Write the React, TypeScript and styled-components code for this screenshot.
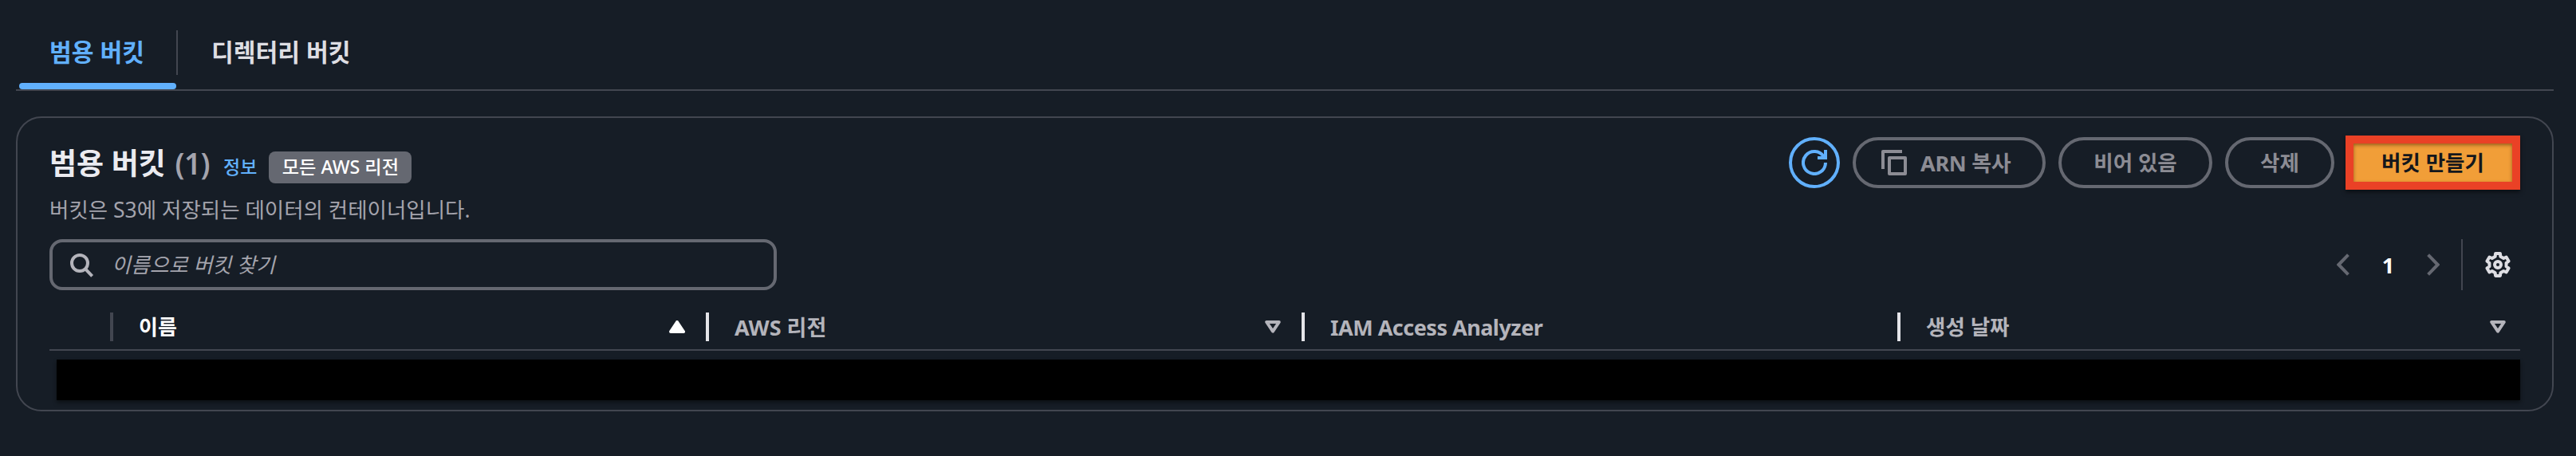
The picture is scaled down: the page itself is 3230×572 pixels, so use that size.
import React from "react";
import styled, { createGlobalStyle, css } from "styled-components";

const color = {
  bg: "#161d26",
  line: "#424650",
  border: "#656871",
  blue: "#61b0fc",
  text: "#dedee3",
  heading: "#ebebf0",
  muted: "#a4a4ad",
  column: "#b4b4bb",
  disabled: "#8c8c94",
};

const GlobalStyle = createGlobalStyle`
  * { box-sizing: border-box; }
  body {
    margin: 0;
    background: ${color.bg};
    font-family: "Noto Sans", "Noto Sans CJK KR", sans-serif;
    color: ${color.text};
  }
`;

const Page = styled.main`
  width: 3230px;
  height: 572px;
  overflow: hidden;
  padding: 0 28px 0 20px;
  background: ${color.bg};
`;

const Label = styled.span<{ $size: number; $weight?: number; $spacing?: number }>`
  font-size: ${(p) => p.$size}px;
  font-weight: ${(p) => p.$weight ?? 400};
  letter-spacing: ${(p) => p.$spacing ?? 0}px;
  line-height: 1;
  white-space: pre;
`;

const Tabs = styled.nav`
  height: 114px;
  padding-top: 38px;
  display: flex;
  border-bottom: 2px solid ${color.line};
`;

const Tab = styled.div<{ $active?: boolean }>`
  display: flex;
  flex-direction: column;
  justify-content: space-between;
  height: 74px;
  color: ${(p) => (p.$active ? color.blue : color.text)};
  ${(p) =>
    p.$active
      ? css`
          width: 197px;
          margin-left: 4px;
        `
      : css`
          padding-left: 42px;
        `}
`;

const TabText = styled.div<{ $inset: number }>`
  height: 56px;
  display: flex;
  align-items: center;
  padding-left: ${(p) => p.$inset}px;
`;

const TabIndicator = styled.div`
  height: 8px;
  border-radius: 4px;
  background: ${color.blue};
`;

const TabDivider = styled.div`
  width: 2px;
  height: 56px;
  background: ${color.line};
`;

const Panel = styled.section`
  margin-top: 32px;
  height: 370px;
  border: 2px solid ${color.line};
  border-radius: 32px;
  padding: 22px 40px 0;
`;

const HeaderRow = styled.header`
  display: flex;
  justify-content: space-between;
  height: 130px;
`;

const TitleLine = styled.div`
  display: flex;
  height: 68px;
  align-items: center;
`;

const Title = styled(Label)`
  color: ${color.heading};
`;

const Count = styled.span`
  margin-left: 2px;
  color: ${color.muted};
  font-weight: 600;
  letter-spacing: -0.5px;
`;

const InfoLink = styled.a`
  display: flex;
  color: ${color.blue};
  margin: 11px 0 0 17px;
`;

const Badge = styled.span`
  width: 179px;
  height: 40px;
  margin: 12px 0 0 15px;
  display: flex;
  align-items: center;
  justify-content: center;
  border-radius: 8px;
  background: ${color.border};
  color: #fff;
`;

const Description = styled.p`
  margin: 12px 0 0;
  display: flex;
  color: ${color.muted};
`;

const Actions = styled.div`
  display: flex;
  gap: 16px;
  padding-top: 2px;
`;

const Button = styled.button<{ $width: number; $lead?: number }>`
  width: ${(p) => p.$width}px;
  height: 64px;
  padding: 0 0 0 ${(p) => p.$lead ?? 0}px;
  display: flex;
  align-items: center;
  justify-content: ${(p) => (p.$lead ? "flex-start" : "center")};
  gap: 17px;
  border: 4px solid ${color.border};
  border-radius: 32px;
  background: transparent;
  color: ${color.disabled};
  font-family: inherit;
`;

const RefreshButton = styled(Button)`
  border-color: ${color.blue};
  color: ${color.blue};
`;

const CreateButton = styled.button`
  width: 219px;
  height: 68px;
  margin: -2px 0 0 -2px;
  padding: 0;
  border: 10px solid #ea4126;
  background: #f19e38;
  box-shadow: 0 3px 5px rgba(0, 0, 0, 0.5), inset 0 2px 4px rgba(60, 30, 0, 0.5);
  color: #14171c;
  font-family: inherit;
`;

const ToolRow = styled.div`
  display: flex;
  justify-content: space-between;
  height: 64px;
`;

const SearchBox = styled.div`
  width: 912px;
  height: 64px;
  padding-left: 20px;
  display: flex;
  align-items: center;
  gap: 22px;
  border: 4px solid ${color.border};
  border-radius: 16px;
  color: ${color.muted};
`;

const Placeholder = styled(Label)`
  font-style: italic;
`;

const Pager = styled.div`
  display: flex;
  align-items: center;
  color: ${color.border};
  padding-right: 12px;
`;

const PageNumber = styled(Label)`
  width: 97px;
  text-align: center;
  color: #fff;
`;

const PagerDivider = styled.div`
  width: 2px;
  height: 64px;
  margin: 0 28px 0 27px;
  background: ${color.line};
`;

const TableHead = styled.div`
  display: flex;
  height: 76px;
  padding: 28px 0 10px 76px;
  border-bottom: 2px solid ${color.line};
`;

const Column = styled.div<{ $first?: boolean; $last?: boolean }>`
  height: 36px;
  display: flex;
  align-items: center;
  justify-content: space-between;
  ${(p) => (p.$last ? "flex: 1; padding-right: 18px;" : "width: 747px; padding-right: 26px;")}
  padding-left: 32px;
  border-left: 4px solid ${(p) => (p.$first ? color.line : "#e4e4e8")};
  color: ${(p) => (p.$first ? "#fff" : color.column)};
`;

const HiddenRow = styled.div`
  height: 51px;
  margin: 11px 0 0 9px;
  background: #000;
  box-shadow: 0 3px 5px rgba(0, 0, 0, 0.45);
`;

const Svg = styled.svg`
  display: block;
  flex: none;
  fill: none;
  stroke: currentColor;
  stroke-width: 2;
`;

const RefreshIcon = () => (
  <Svg width="32" height="32" viewBox="0 0 16 16">
    <path d="M15 8a7 7 0 1 1-1-3.6" />
    <path d="M15 0v5h-5" />
  </Svg>
);

const CopyIcon = () => (
  <Svg width="32" height="32" viewBox="0 0 16 16" strokeLinejoin="round">
    <path d="M13 1H1v11" />
    <path d="M5 5h10v10H5z" />
  </Svg>
);

const SearchIcon = () => (
  <Svg width="32" height="32" viewBox="0 0 16 16" color={color.column}>
    <circle cx="7" cy="7" r="5" />
    <path d="M10.4 10.6l4.4 4.6" />
  </Svg>
);

const Chevron = ({ right }: { right?: boolean }) => (
  <Svg width="16" height="28" viewBox="0 0 8 14">
    <path d={right ? "M.8.8L6.8 7l-6 6.2" : "M7.2.8L1.2 7l6 6.2"} />
  </Svg>
);

const gearPoints = [90, 30, -30, -90, -150, -210]
  .flatMap((a) =>
    [
      [18, 5.4],
      [12, 7.1],
      [-12, 7.1],
      [-18, 5.4],
    ].map(([offset, r]) => {
      const t = ((a + offset) * Math.PI) / 180;
      return `${(8 + r * Math.cos(t)).toFixed(2)},${(8 - r * Math.sin(t)).toFixed(2)}`;
    })
  )
  .join(" ");

const GearIcon = () => (
  <Svg width="32" height="32" viewBox="0 0 16 16" strokeLinejoin="round" color={color.text}>
    <polygon points={gearPoints} />
    <circle cx="8" cy="8" r="2" />
  </Svg>
);

const SortIcon = ({ ascending }: { ascending?: boolean }) => (
  <Svg width="20" height="16" viewBox="0 0 10 8" strokeLinejoin="round">
    {ascending ? (
      <path d="M5 1L9 7H1z" fill="currentColor" />
    ) : (
      <path d="M1.1 1h7.8L5 6.8z" />
    )}
  </Svg>
);

export default function App() {
  return (
    <>
      <GlobalStyle />
      <Page>
        <Tabs>
          <Tab $active>
            <TabText $inset={38}>
              <Label $size={30.2} $weight={700}>범용 버킷</Label>
            </TabText>
            <TabIndicator />
          </Tab>
          <TabDivider />
          <Tab>
            <TabText $inset={0}>
              <Label $size={30.2} $weight={700}>디렉터리 버킷</Label>
            </TabText>
          </Tab>
        </Tabs>
        <Panel>
          <HeaderRow>
            <div>
              <TitleLine>
                <Title $size={37} $weight={700}>
                  범용 버킷 <Count>(1)</Count>
                </Title>
                <InfoLink>
                  <Label $size={23} $weight={500}>정보</Label>
                </InfoLink>
                <Badge>
                  <Label $size={23.2} $weight={500}>모든 AWS 리전</Label>
                </Badge>
              </TitleLine>
              <Description>
                <Label $size={26.5}>버킷은 S3에 저장되는 데이터의 컨테이너입니다.</Label>
              </Description>
            </div>
            <Actions>
              <RefreshButton $width={64} aria-label="refresh">
                <RefreshIcon />
              </RefreshButton>
              <Button $width={242} $lead={32}>
                <CopyIcon />
                <Label $size={27} $weight={700} $spacing={-0.3}>ARN 복사</Label>
              </Button>
              <Button $width={193}>
                <Label $size={26.5} $weight={700}>비어 있음</Label>
              </Button>
              <Button $width={137}>
                <Label $size={26.5} $weight={700}>삭제</Label>
              </Button>
              <CreateButton>
                <Label $size={26.5} $weight={700}>버킷 만들기</Label>
              </CreateButton>
            </Actions>
          </HeaderRow>
          <ToolRow>
            <SearchBox>
              <SearchIcon />
              <Placeholder $size={26}>이름으로 버킷 찾기</Placeholder>
            </SearchBox>
            <Pager>
              <Chevron />
              <PageNumber $size={27} $weight={700}>1</PageNumber>
              <Chevron right />
              <PagerDivider />
              <GearIcon />
            </Pager>
          </ToolRow>
          <TableHead>
            <Column $first>
              <Label $size={26} $weight={700}>이름</Label>
              <SortIcon ascending />
            </Column>
            <Column>
              <Label $size={27} $weight={700}>AWS 리전</Label>
              <SortIcon />
            </Column>
            <Column>
              <Label $size={27} $weight={700} $spacing={-0.5}>IAM Access Analyzer</Label>
            </Column>
            <Column $last>
              <Label $size={26.5} $weight={700}>생성 날짜</Label>
              <SortIcon />
            </Column>
          </TableHead>
          <HiddenRow />
        </Panel>
      </Page>
    </>
  );
}
